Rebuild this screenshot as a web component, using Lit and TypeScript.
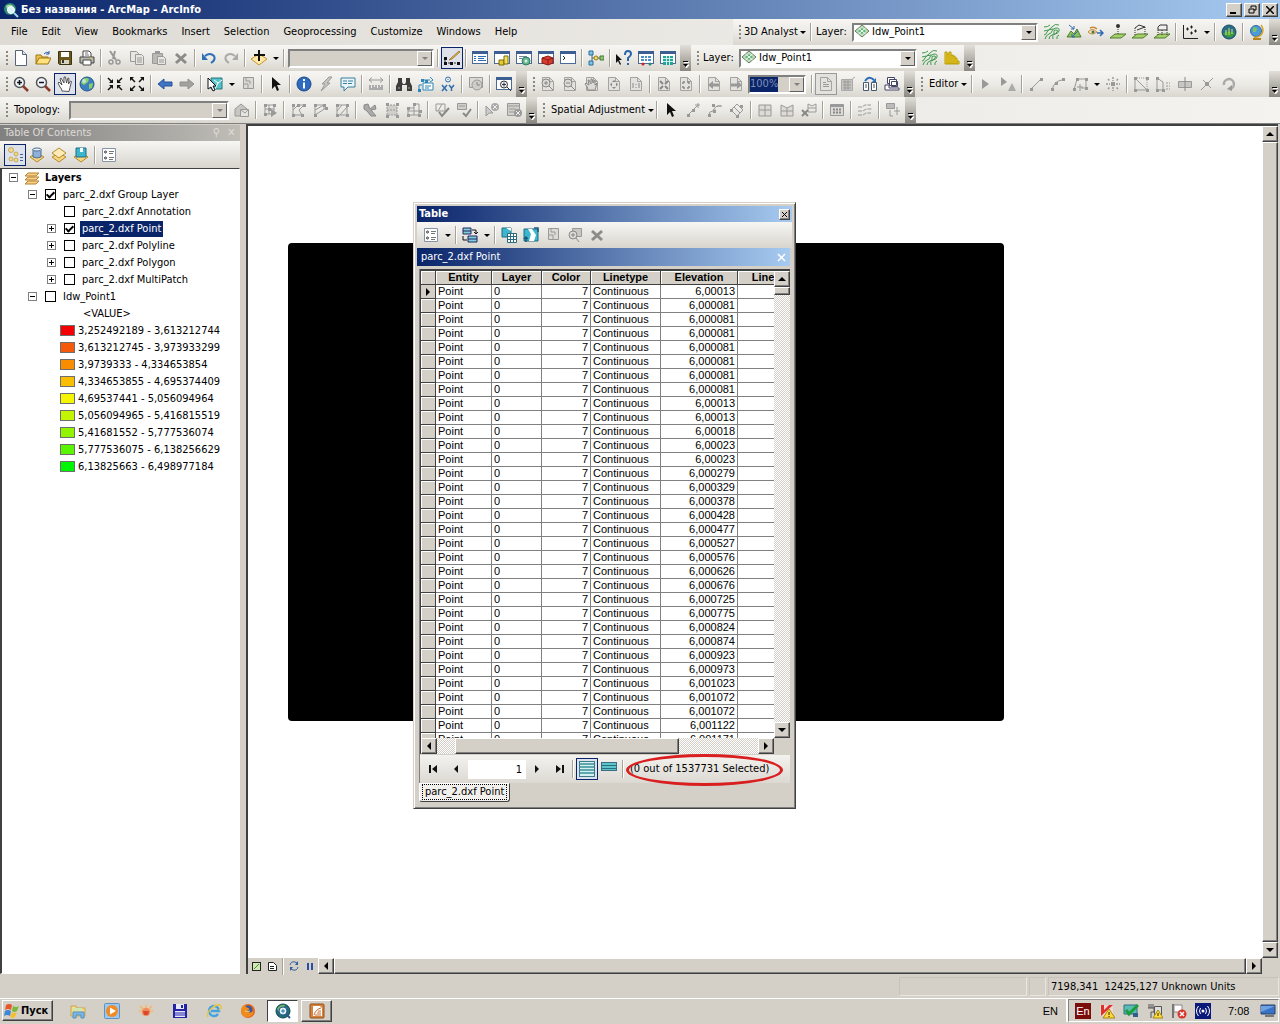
import { LitElement, html, css, svg, nothing } from "lit";
import { customElement, state } from "lit/decorators.js";
import { classMap } from "lit/directives/class-map.js";
import { styleMap } from "lit/directives/style-map.js";

const page = svg`<path d="M2.500 1.500h7l4 4v9h-11z" fill="#e4e2de" stroke="#a5a3a0"/><path d="M9.500 1.500v4h4" fill="none" stroke="#a5a3a0"/>`;
const contour = svg`<g fill="none" stroke="#3d9a4e"><path d="M0 3q4 0 6-2M0 7q5 0 8-4t7-2M0 11q2 0 3-3t6-3M1 15q1-4 4-5t3-3 4-3q4 0 3 3t-4 3-2 5M5 15q0-3 3-4t2-3 2-2 1 2-3 3"/><path d="M13 15q-1-3 2-4" /></g>`;
const layerPage = svg`<path d="M1 10l7-4 7 4-7 5z" fill="#f6d583" stroke="#b58a2c"/>`;
const win = svg`<rect x="0.500" y="1.500" width="15" height="12" fill="#fff" stroke="#4d6a94"/><rect x="0" y="1" width="16" height="3" fill="#3d5e92"/>`;
const sheet = svg`<path d="M0 14h11l5-4H5z" fill="#a6cf6a" stroke="#4f7d2c"/>`;
const nodes = (pts: number[][], c = "#999") => pts.map(([x, y]) => svg`<rect x=${x - 1} y=${y - 1} width="3" height="3" fill=${c}/>`);

const icons: Record<string, unknown> = {
  app: svg`<circle cx="7" cy="7" r="6" fill="#2d8a78"/><path d="M3 4q4-3 7 0l-2 4-4-1z" fill="#a8dba0"/><circle cx="8" cy="8" r="3.500" fill="#d9f2fa" stroke="#fff"/><path d="M11 11l4 4" stroke="#9fd8e8" stroke-width="2"/>`,
  new: svg`<path d="M2.500 0.500h7l4 4v11h-11z" fill="#fff" stroke="#55657c"/><path d="M9.500 0.500v4h4" fill="#dde4ee" stroke="#55657c"/>`,
  open: svg`<path d="M1 14V5h5l1 2h6v3" fill="#f2c04c" stroke="#9c7616"/><path d="M1 14l3-6h12l-3 6z" fill="#ffe27a" stroke="#9c7616"/><path d="M9 4q2-3 5-1M14 1v3h-3" fill="none" stroke="#2a5da8"/>`,
  save: svg`<path d="M1.500 1.500h13v13h-12l-1-1z" fill="#6b5a1c" stroke="#3c3312"/><path d="M4 2h8v5H4z" fill="#fff"/><path d="M4 10h8v4H4z" fill="#d8d4c4"/><path d="M5 10h2v3H5z" fill="#333"/>`,
  print: svg`<path d="M4 7V1h6l2 2v4" fill="#fff" stroke="#444"/><path d="M1 7h14v6H1z" fill="#b9b9b0" stroke="#444"/><path d="M4 10h8v5H4z" fill="#fff" stroke="#444"/><path d="M6 3h3M6 5h4" stroke="#777"/><path d="M11 8h2" stroke="#e0d32e"/>`,
  cut: svg`<path d="M3 1l6 9M8 1l-2 8" stroke="#999" stroke-width="2" fill="none"/><circle cx="4" cy="12" r="2" fill="none" stroke="#999" stroke-width="1.500"/><circle cx="11" cy="12" r="2" fill="none" stroke="#999" stroke-width="1.500"/>`,
  copy: svg`<path d="M1.500 1.500h6l2 2v8h-8z" fill="#e8e6e1" stroke="#999"/><path d="M6.500 4.500h6l2 2v8h-8z" fill="#e8e6e1" stroke="#999"/><path d="M8 8h5M8 10h5M8 12h5" stroke="#999"/>`,
  paste: svg`<path d="M1.500 3.500h10v10h-10z" fill="#bdbab4" stroke="#999"/><path d="M4 1h5v3H4z" fill="#999"/><path d="M6.500 6.500h6l2 2v6h-8z" fill="#e8e6e1" stroke="#999"/><path d="M8 10h5M8 12h5" stroke="#999"/>`,
  del: svg`<path d="M3 4l10 9M13 4L3 13" stroke="#8d8b87" stroke-width="3"/>`,
  undo: svg`<path d="M4 6q5-4 9 0 2 4-3 7" fill="none" stroke="#2f6fb5" stroke-width="2"/><path d="M1 3v7h6z" fill="#2f6fb5"/>`,
  redo: svg`<path d="M12 6q-5-4-9 0-2 4 3 7" fill="none" stroke="#aaa" stroke-width="2"/><path d="M15 3v7H9z" fill="#aaa"/>`,
  add: svg`<path d="M0 9l8-5 8 5-8 6z" fill="#ffe9a8" stroke="#c9942e"/><path d="M8 0v11M3 5h11" stroke="#111" stroke-width="2"/>`,
  edit: svg`<path d="M15 1l-8 7-2 2 3-1 8-7z" fill="#e6b64a" stroke="#8b6a20" stroke-width="0.700"/><path d="M1 7v6h13" fill="none" stroke="#333" stroke-dasharray="2 1"/><path d="M0 7h3v3H0zM0 12h3v3H0zM6 12h3v3H6zM13 12h3v3h-3z" fill="#111"/>`,
  toc: svg`${win}<path d="M2 6.500h2M2 8.500h2M2 10.500h2" stroke="#2e6bb5"/><path d="M6 6.500h8M6 8.500h6M6 10.500h8" stroke="#2e6bb5"/>`,
  catalog: svg`${win}<path d="M5 10h5v5H5z" fill="#e8c92e" stroke="#7b6a11"/><path d="M10 6h4v8h-4z" fill="#f4e05c" stroke="#7b6a11"/>`,
  search: svg`${win}<path d="M3 6.500h8M3 8.500h3" stroke="#789"/><circle cx="10" cy="11" r="4" fill="#66b58a" stroke="#2c7c6a"/><circle cx="10" cy="11" r="1.500" fill="#d7f0e4"/>`,
  toolbox: svg`${win}<path d="M4 8l6-2 5 2v5l-5 2-6-2z" fill="#d63b2d" stroke="#8c1c14"/><path d="M4 8l6 2 5-2M10 10v5" stroke="#8c1c14" fill="none"/>`,
  python: svg`${win}<path d="M3 6l2 2-2 2" fill="none" stroke="#222"/>`,
  model: svg`<path d="M4 3v9M4 8h8" stroke="#4a6b8d" fill="none"/><path d="M1 1h4v4H1zM1 11h4v4H1z" fill="#7cc7ea" stroke="#2a6d9b"/><circle cx="8" cy="8" r="2" fill="#f7e06a" stroke="#8f7b17"/><path d="M12 6h4v4h-4z" fill="#93c47a" stroke="#427a2b"/>`,
  help: svg`<path d="M0 4v9l2-2 2 4 1-1-2-4h3z" fill="#111"/><path d="M9 5q0-4 3-4t3 3q0 2-3 4v3M12 13v2" fill="none" stroke="#2b64a8" stroke-width="2"/>`,
  grid1: svg`${win}<path d="M3 6h10v5H3z" fill="#4b8fc4"/><path d="M3 8.500h10M6.500 6v5M9.500 6v5" stroke="#fff"/><circle cx="5" cy="14" r="1.500" fill="#c22"/><circle cx="12" cy="14" r="1.500" fill="#287"/>`,
  grid2: svg`${win}<path d="M3 6h10v9H3z" fill="#21a494"/><path d="M3 8.500h10M3 11.500h10M6.500 6v9M9.500 6v9" stroke="#cfeee9"/>`,
  contour,
  hist: svg`<path d="M1 14V2h2v2h2V2h2v3h2v1h2v2h2v3h2v3z" fill="#f5d327" stroke="#b59b0a"/><path d="M3 4v10M5 4v10M7 5v9M9 6v8M11 8v6M13 11v3" stroke="#a58b00" stroke-width="0.800"/>`,
  zoomin: svg`<circle cx="6.500" cy="6.500" r="5" fill="#eef4fb" stroke="#555" stroke-width="1.500"/><path d="M4 6.500h5M6.500 4v5" stroke="#111" stroke-width="1.500"/><path d="M10 10l5 5" stroke="#8c3a2b" stroke-width="2.500"/>`,
  zoomout: svg`<circle cx="6.500" cy="6.500" r="5" fill="#eef4fb" stroke="#555" stroke-width="1.500"/><path d="M4 6.500h5" stroke="#111" stroke-width="1.500"/><path d="M10 10l5 5" stroke="#8c3a2b" stroke-width="2.500"/>`,
  pan: svg`<path d="M5 15q0-2-2-4L1 7l1-1 3 3L3 3l1-1 3 5V1h1.500l1 6 1.500-5 1 0.500-0.500 5.500 2-3 1 0.500-1.500 6-1 4z" fill="#fff" stroke="#444" stroke-width="0.900"/>`,
  globe: svg`<circle cx="8" cy="8" r="7" fill="#3b7fc0" stroke="#255a8c"/><path d="M4 3q4-2 6 0l-1 3-4 3-3-2zM10 8l4-1-1 5-3 1z" fill="#8ccf6a"/><circle cx="5" cy="5" r="2" fill="#d8eefc" opacity="0.700"/>`,
  fixin: svg`<g stroke="#111" stroke-width="1.500"><path d="M1 2l4 4M15 2l-4 4M1 14l4-4M15 14l-4-4"/></g><path d="M6 3v4H2zM10 3v4h4zM6 13V9H2zM10 13V9h4z" fill="#111"/>`,
  fixout: svg`<g stroke="#111" stroke-width="1.500"><path d="M2 2l4 4M14 2l-4 4M2 14l4-4M14 14l-4-4"/></g><path d="M1 1h4L1 5zM15 1h-4l4 4zM1 15h4l-4-4zM15 15h-4l4-4z" fill="#111"/>`,
  back: svg`<path d="M1 8l6-5v3h8v4H7v3z" fill="#3f74c2" stroke="#27509a"/>`,
  fwd: svg`<path d="M15 8L9 3v3H1v4h8v3z" fill="#a3a19d" stroke="#92908c"/>`,
  select: svg`<path d="M4 2h11v11H4z" fill="#56c2c9" stroke="#25777c"/><path d="M7 4l4 3 4-3M8 13l3-6" stroke="#fff" fill="none"/><path d="M1 2v11l3-2 2 4 2-1-2-4h3z" fill="#fff" stroke="#111"/>`,
  clear: svg`<path d="M3.500 1.500h10v11h-10z" fill="#dddad5" stroke="#999"/><path d="M6 1v4h4v3M3 8h5v4" fill="none" stroke="#999"/>`,
  arrow: svg`<path d="M4 1v12l3-3 2 5 2-1-2-5h4z" fill="#111"/>`,
  info: svg`<circle cx="8" cy="8" r="7" fill="#2d6bc0" stroke="#1b4585"/><path d="M8 3v2M8 6.500v6" stroke="#fff" stroke-width="2"/>`,
  bolt: svg`<path d="M11 1L4 8h3l-4 7 9-8H9l5-6z" fill="#c9c7c3" stroke="#999"/>`,
  html: svg`<path d="M1 2h14v9H8l-4 4v-4H1z" fill="#eaf5fa" stroke="#3b7f9c"/><path d="M3 5h4M3 7.500h4M8 5h5M8 7.500h4" stroke="#3b7f9c"/>`,
  measure: svg`<path d="M1 4h14M4 1.500L1 4l3 2.500M12 1.500L15 4l-3 2.500" stroke="#999" fill="none"/><path d="M1 9h14v5H1z" fill="#aaa"/><path d="M3.500 9v3M6.500 9v2M9.500 9v3M12.500 9v2" stroke="#eee"/>`,
  find: svg`<path d="M2 2h4v4l1 2h2l1-2V2h4v4l2 4v5h-5V9H6v6H0v-5l2-4z" fill="#3c3c3c"/><path d="M2 12h2M12 12h2" stroke="#aaa"/>`,
  route: svg`<path d="M5 7h10v7H5z" fill="#fff" stroke="#2d86b5"/><path d="M7 10h6M7 12h4M1 14V9h3M4 4h8M12 1l3 3-3 2" stroke="#2d86b5" fill="none"/>${nodes([[4, 4], [1, 14], [8, 5]], "#2d86b5")}`,
  xy: svg`<circle cx="8" cy="3.500" r="2.500" fill="none" stroke="#2d6fb0"/><path d="M8 3v1" stroke="#2d6fb0"/><path d="M2 9l5 6M7 9l-5 6M9 9l2.500 3L14 9M11.500 12v3" stroke="#2d6fb0" stroke-width="1.500" fill="none"/>`,
  time: svg`<path d="M1.500 1.500h13v10h-13z" fill="#dddad5" stroke="#999"/><circle cx="9" cy="9" r="5" fill="#d0cdc8" stroke="#999"/><path d="M9 6v3h3" stroke="#888" fill="none"/>`,
  viewer: svg`${win}<circle cx="8" cy="8.500" r="3.500" fill="#eef" stroke="#333"/><path d="M6 8.500h4M8 6.500v4M11 11l4 4" stroke="#333"/>`,
  lzin: svg`${page}<circle cx="6" cy="7" r="4" fill="#dedbd6" stroke="#888"/><path d="M4 7h4M6 5v4M9 10l4 4" stroke="#888"/>`,
  lzout: svg`${page}<circle cx="6" cy="7" r="4" fill="#dedbd6" stroke="#888"/><path d="M4 7h4M9 10l4 4" stroke="#888"/>`,
  lpan: svg`${page}<path d="M4 14q0-3-3-6l1-1 3 2-1-5h1l2 4V3h1l1 4 2-3v5l2-2-2 7z" fill="#dedbd6" stroke="#888"/>`,
  lfull: svg`${page}<path d="M8 4l2 2H6zM8 13l2-2H6zM4 8.500l2-2v4zM12 8.500l-2-2v4z" fill="#888"/>`,
  l11: svg`${page}<path d="M5 7v5M11 7v5M8 8v1M8 11v1" stroke="#888"/>`,
  lfin: svg`${page}<path d="M4 5l3 3M12 5L9 8M4 13l3-3M12 13l-3-3" stroke="#888" stroke-width="2"/>`,
  lfout: svg`${page}<path d="M5 6h2M5 6v2M11 6H9M11 6v2M5 12h2M5 12v-2M11 12H9M11 12v-2" stroke="#888" stroke-width="1.500"/>`,
  lback: svg`${page}<path d="M2 9l5-4v2.500h6v3H7V13z" fill="#999"/>`,
  lfwd: svg`${page}<path d="M14 9L9 5v2.500H3v3h6V13z" fill="#999"/>`,
  draft: svg`${page}<path d="M5 8.500h6M5 10.500h6M5 6.500h3" stroke="#999"/>`,
  focus: svg`<path d="M1.500 3.500h11v11h-11z" fill="#c9c6c1" stroke="#aaa"/><path d="M3 6h8M3 9h8M3 12h8M5 4v10M8 4v10" stroke="#999"/><path d="M11 4l4-3" stroke="#aaa"/>`,
  layout: svg`<path d="M1.500 6.500h5v8h-5zM9.500 6.500h5v8h-5z" fill="#fff" stroke="#44586f"/><path d="M3 9h2M3 11h2M11 9h2M11 11h2" stroke="#44586f"/><path d="M3 5q4-6 9-1" stroke="#2a6db5" stroke-width="2" fill="none"/><path d="M14 2v4h-4z" fill="#2a6db5"/>`,
  ddp: svg`<path d="M3.500 1.500h7v6h-7z" fill="#fff" stroke="#446"/><path d="M5.500 3.500h7v6h-7zM7.500 5.500h6v5h-6z" fill="#fff" stroke="#446"/><path d="M1 9v5h14v-2H5V9z" fill="#fff" stroke="#446"/>`,
  earrow: svg`<path d="M4 3v10l7-5z" fill="#999"/>`,
  earrow2: svg`<path d="M1 1v9l6-4z" fill="#999"/><path d="M12 7l4 8H8z" fill="#aaa"/>`,
  line: svg`<path d="M3 13L13 3" stroke="#999"/>${nodes([[3, 13], [13, 3]])}`,
  curve: svg`<path d="M2 14q2-9 10-10" stroke="#999" fill="none"/>${nodes([[2, 13], [6, 7], [13, 3]])}`,
  poly: svg`<path d="M2 14L5 3h9v9H9" stroke="#999" fill="none"/><path d="M8 8v7M5 11h6" stroke="#999"/>${nodes([[5, 3], [14, 3], [2, 13], [14, 12]])}`,
  burst: svg`<path d="M8 1v4M8 11v4M1 8h4M11 8h4M3 3l2 2M13 3l-2 2M3 13l2-2M13 13l-2-2" stroke="#999" stroke-width="1.500" stroke-dasharray="2 1"/><rect x="6" y="6" width="4" height="4" fill="#999"/>`,
  tri: svg`<path d="M2 2v12h12z" stroke="#999" fill="none"/><path d="M2 2h12v12" stroke="#999" stroke-dasharray="1 1" fill="none"/>${nodes([[2, 2], [14, 2], [2, 14], [14, 14]])}`,
  tri2: svg`<path d="M2 14V2l6 4v8z" stroke="#999" fill="none"/><path d="M11 7h4M11 10h4M11 13h4" stroke="#999" stroke-dasharray="2 1"/>${nodes([[2, 2], [2, 14], [8, 14]])}`,
  split: svg`<path d="M1.500 5.500h13v6h-13z" fill="#c9c6c1" stroke="#999"/><path d="M8 1v14" stroke="#888"/>`,
  cross: svg`<path d="M2 14L14 2M4 4l8 8" stroke="#999"/><path d="M6 6h4v4H6z" fill="#999"/>`,
  rotate: svg`<path d="M3 9a5 5 0 1 1 6 4" stroke="#aaa" stroke-width="2.500" fill="none"/><path d="M11 9v6l-5-2z" fill="#999"/>`,
  topo: svg`<path d="M1 7l6-5 6 5v7H1z" fill="#c9c6c1" stroke="#999"/><path d="M6.500 7.500h8v7h-8z" fill="#e6e4df" stroke="#999"/><path d="M7 8l4 3 3-3" stroke="#999" fill="none"/>`,
  net1: svg`<path d="M3 3h9v9H3zM3 7h9M7 3v9" stroke="#999" fill="none"/>${nodes([[3, 3], [12, 3], [3, 12], [7, 7]])}<path d="M9 7v8l6-4z" fill="#999"/>`,
  net2: svg`<path d="M3 3v10h9L9 8l5-5H8L3 8" stroke="#999" fill="none"/>${nodes([[3, 3], [8, 3], [14, 3], [3, 13], [12, 13]])}`,
  net3: svg`<path d="M3 13V3h9v4M3 8l9-5M3 13l11-7" stroke="#999" fill="none"/>${nodes([[3, 3], [12, 3], [3, 13], [14, 6]])}`,
  net4: svg`<path d="M3 3h10v10H3zM3 9l5-6M6 13l7-8" stroke="#999" fill="none"/>${nodes([[3, 3], [13, 3], [3, 13], [13, 13]])}`,
  hatch: svg`<path d="M2 3l4-1 2 5 5-4 1 4-5 1 5 6H9L5 9 2 7z" fill="#aaa" stroke="#888"/>`,
  gsq: svg`<path d="M3 3h10v10H3zM3 8h10" stroke="#999" fill="#d2cfca" stroke-dasharray="2 1"/>${nodes([[3, 2], [13, 2], [3, 14], [13, 14]])}`,
  gplus: svg`<path d="M2 9V6h6V2h5v11H2zM8 6v7M2 9h12" stroke="#999" fill="none"/>${nodes([[8, 2], [2, 6], [14, 9], [2, 13], [13, 13]])}`,
  val1: svg`<path d="M2 2h9v7H2zM4 9l4-7" stroke="#999" fill="none"/><path d="M5 10l3 4 7-8" stroke="#888" stroke-width="2" fill="none"/>`,
  val2: svg`<path d="M1.500 1.500h9v6h-9zM3 4h6" stroke="#999" fill="#d2cfca"/><path d="M7 11l3 3 5-7" stroke="#888" stroke-width="2" fill="none"/>`,
  err1: svg`<path d="M2 4v10l3-3 4 0z" fill="#ccc" stroke="#999"/><circle cx="11" cy="5" r="4" fill="#aaa"/><path d="M9 3l4 4M13 3L9 7" stroke="#eee"/>`,
  err2: svg`<path d="M1.500 1.500h12v12h-12zM1 4h13M3 7h7M3 10h5" stroke="#999" fill="#d2cfca"/><circle cx="12" cy="11" r="4" fill="#999"/><path d="M10 9l4 4M14 9l-4 4" stroke="#eee"/>`,
  link1: svg`<path d="M2 14L13 3M10 3h5M13 1v5" stroke="#999" fill="none"/>${nodes([[3, 13], [8, 8]])}`,
  link2: svg`<path d="M2 13q0-4 4-4 2-6 8-5M10 4h5M8 7v4" stroke="#999" fill="none"/>${nodes([[2, 13], [7, 9], [6, 3]])}`,
  link3: svg`<path d="M8 2l6 6-6 6-6-6zM5 5l6 6" stroke="#999" fill="none"/>${nodes([[2, 8], [8, 14], [12, 4]])}`,
  adj1: svg`<path d="M2 3h12v11H2zM2 8h12M8 3v11" stroke="#999" fill="#dedbd6"/>`,
  adj2: svg`<path d="M2 3l6 3 6-3v11H2zM2 9h12M8 6v8" stroke="#999" fill="#dedbd6"/>`,
  adj3: svg`<path d="M7 2l4 2 4-2v8H7zM7 6h8" stroke="#999" fill="none"/><path d="M1 8l6 6M7 8l-6 6" stroke="#888" stroke-width="2"/>`,
  tbl: svg`<path d="M1.500 2.500h13v11h-13z" fill="#dedbd6" stroke="#999"/><path d="M2 4h12" stroke="#999" stroke-width="2"/><path d="M4 7.500h2M7 7.500h2M10 7.500h2M4 10.500h2M7 10.500h2M10 10.500h2" stroke="#888" stroke-width="2"/>`,
  edge: svg`<path d="M1 5h4l3-2h6M1 9h5l3-2h6M1 13h5l3-2h5" stroke="#999" stroke-dasharray="4 1" fill="none"/>`,
  attr: svg`<path d="M1.500 1.500h8v5h-8z" fill="#bbb" stroke="#999"/><path d="M5 8v6M5 14h3M12 5v8M9 9h6" stroke="#999" fill="none"/>`,
  tin1: svg`<path d="M1 13l4-6 3 3 3-5 4 8z" fill="#8cc15e" stroke="#4f7d2c"/><path d="M3 1l5 4M8 5H5M8 5V2M12 7l-6 6M6 13v-3M6 13h3" stroke="#2b6bb5" fill="none"/>`,
  eye: svg`<path d="M0 8q4-5 9 0-5 4-9 0" fill="#f5dfc2" stroke="#c98a3e"/><circle cx="5" cy="8" r="1.500" fill="#3a7d3a"/><path d="M2 4q4-2 7 1" stroke="#c98a3e" stroke-width="1.500" fill="none"/><path d="M9 9h6M12 6l3 3-3 3" stroke="#2b6bb5" stroke-width="1.500" fill="none"/>`,
  pt3d: svg`${sheet}<path d="M8 3v8" stroke="#333" stroke-dasharray="1 1"/><circle cx="8" cy="2" r="2" fill="#333"/>`,
  ln3d: svg`${sheet}<path d="M3 4l4-3 6 2-8 3" stroke="#333" fill="none"/><path d="M3 4v8M13 3v8" stroke="#333" stroke-dasharray="1 1"/>`,
  pg3d: svg`${sheet}<path d="M4 6V3l2-2h7v5z" stroke="#333" fill="#eee"/><path d="M4 6v6M13 6v5M8 6v5" stroke="#333" stroke-dasharray="1 1"/>`,
  scatter: svg`<path d="M1.500 1v13.500H16" stroke="#222" fill="none"/><path d="M4 5h3M5.500 3.500v3M8 3h3M9.500 1.500v3M8 9h3M9.500 7.500v3M12 7h3M13.500 5.500v3" stroke="#222" fill="none"/>`,
  scene: svg`<circle cx="8" cy="8" r="7" fill="#2a6d87" stroke="#1d4d60"/><path d="M2 9q6-3 12 0-5 9-12 0" fill="#3a9a3e"/><path d="M5 6v5M8 4v7M11 5v5" stroke="#d7e86a"/>`,
  earth: svg`<circle cx="7" cy="7" r="5.500" fill="#4c9bd8" stroke="#2b6ba4"/><path d="M4 3l4 1-1 4-3 0z" fill="#7ac35e"/><path d="M12 1q4 5 0 10-3 3-7 2" fill="none" stroke="#d6a226" stroke-width="1.500"/><path d="M4 15h8" stroke="#b5831c" stroke-width="2"/>`,
  raster: svg`<path d="M8 1l7 6-7 6-7-6z" fill="#c4dcc0" stroke="#5f7f5c"/><path d="M8 4l4 3-4 3-4-3z" fill="#5cb878"/><path d="M4.500 4l7 6M11.500 4l-7 6" stroke="#f5fbf5"/>`,
  listdraw: svg`<circle cx="4" cy="3" r="2.500" fill="#f0d98a" stroke="#b5963c" stroke-width="0.700"/><circle cx="9" cy="7" r="2" fill="#f0d98a" stroke="#b5963c" stroke-width="0.700"/><circle cx="4" cy="12" r="2" fill="#f0d98a" stroke="#b5963c" stroke-width="0.700"/><circle cx="9" cy="13" r="2" fill="#f0d98a" stroke="#b5963c" stroke-width="0.700"/><path d="M13 7.500h3M13 10.500h3M13 13.500h3" stroke="#47649a" fill="none"/>`,
  listsrc: svg`${layerPage}<path d="M4 2v8q4 2 8 0V2z" fill="#8fb0d8" stroke="#4d6d93"/><ellipse cx="8" cy="2.500" rx="4" ry="1.500" fill="#eef5fc" stroke="#4d6d93"/>`,
  listvis: svg`<path d="M1 10l7-4 7 4-7 5z" fill="#f6d583" stroke="#b58a2c"/><path d="M1 6l7-5 7 5-7 5z" fill="#fdeab6" stroke="#b58a2c"/>`,
  listsel: svg`${layerPage}<path d="M3 1h10v9H3z" fill="#3bb6cc" stroke="#1f6d85"/><path d="M7 1h3v4h-3z" fill="#fff"/>`,
  options: svg`<path d="M1.500 1.500h13v13h-13z" fill="#fff" stroke="#8793a8"/><circle cx="4.500" cy="5" r="1" fill="none" stroke="#333"/><circle cx="4.500" cy="11" r="1" fill="none" stroke="#333"/><path d="M8 4.500h5M8 6.500h4M8 10.500h5M8 12.500h4" stroke="#777"/>`,
  layers: svg`<path d="M1 14l3-3h11l-3 3zM1 10l3-3h11l-3 3zM1 6l3-3h11l-3 3z" fill="#f7d08a" stroke="#b8812a"/>`,
  related: svg`<path d="M1 1h8v6H1zM6 9h9v6H6z" fill="#7fd0d3" stroke="#226"/><path d="M1 4h8M6 12h9" stroke="#226"/><path d="M10 3h4v4M12 5l2 2 2-2M5 13H1V9" stroke="#111" fill="none"/>`,
  selattr: svg`<path d="M1 1h9v9H1z" fill="#3bb6cc" stroke="#1f6d85"/><path d="M5 1l5 3v-3z" fill="#fff"/><path d="M6.500 6.500h9v9h-9z" fill="#fff" stroke="#2c6a80"/><path d="M7 9.500h8M7 12.500h8M9.500 7v8M12.500 7v8" stroke="#2c6a80"/>`,
  switchsel: svg`<path d="M1 2h14v12H1z" fill="#3bb6cc" stroke="#1f6d85"/><path d="M5 2l3 5-2 7h5l2-6-4-6z" fill="#fff"/><path d="M11 1h4v4M3 15v-4M1 12l2-2 2 2" stroke="#1a5a78" stroke-width="1.500" fill="none"/>`,
  zoomsel: svg`<path d="M5.500 1.500h9v8h-9z" fill="#cbc8c3" stroke="#999"/><circle cx="6" cy="8" r="4" fill="#dedbd6" stroke="#888"/><path d="M4 8h4M6 6v4M9 11l3 4" stroke="#888"/>`,
  first: svg`<path d="M4 4v8" stroke="#111" stroke-width="2"/><path d="M11 4v8L6 8z" fill="#111"/>`,
  prev: svg`<path d="M10 4v8L6 8z" fill="#111"/>`,
  next: svg`<path d="M6 4v8l4-4z" fill="#111"/>`,
  last: svg`<path d="M12 4v8" stroke="#111" stroke-width="2"/><path d="M5 4v8l5-4z" fill="#111"/>`,
  allrec: svg`<rect x="0.500" y="0.500" width="15" height="15" fill="#d4f0f0" stroke="#3a7c88"/><path d="M1 3h14M1 6h14M1 9h14M1 12h14" stroke="#3a8f98" stroke-width="1.500"/>`,
  selrec: svg`<rect x="0.500" y="1.500" width="15" height="8" fill="#5ec3cb" stroke="#3a6c88"/><path d="M1 4.500h14M1 7.500h14" stroke="#256f7c"/>`,
  dataview: svg`<rect x="4.500" y="4.500" width="8" height="8" fill="#cfe8b4" stroke="#222"/><path d="M6 11l5-5" stroke="#4a8a3a"/>`,
  pageview: svg`<path d="M4.500 4.500h5l3 3v5h-8z" fill="#fff" stroke="#222"/><path d="M6 8.500h4M6 10.500h4" stroke="#222"/>`,
  refresh: svg`<path d="M4 7q1-4 5-3l2 1M12 9q-1 4-5 3l-2-1" stroke="#2b5f9b" fill="none"/><path d="M12 3v4H9zM4 13V9h3z" fill="#2b5f9b"/>`,
  pause: svg`<path d="M6 5v7M10 5v7" stroke="#2a4ea3" stroke-width="2"/>`,
  start: svg`<path d="M2 2q3-2 6 0L7 7Q4 5 1 7z" fill="#e8572b"/><path d="M9 3q3 2 6 0l-2 5q-3 2-5 0z" fill="#7cb83a"/><path d="M1 8q3-2 6 0l-1 5q-3-2-6 0z" fill="#3f86d6"/><path d="M8 9q2 2 5 0l-2 5q-2 2-5 0z" fill="#f5c02f"/>`,
  explorer: svg`<path d="M1 13V3h5l1 2h8v8z" fill="#f6dc88" stroke="#c7a54a"/><path d="M3 5h9v3H3z" fill="#cde6b0"/><path d="M3 9h11v6h-3v-3H6v3H3z" fill="#7db9e8" stroke="#4f8fc2"/>`,
  media: svg`<rect x="0.500" y="0.500" width="15" height="15" rx="1" fill="#9ec7ee" stroke="#5b92c8"/><circle cx="8" cy="8" r="6" fill="#f08a24"/><path d="M6 4.500v7L12 8z" fill="#fff"/>`,
  sun: svg`<path d="M8 9L2 3M8 9L1 8M8 9l6-6M8 9l7-1M8 9V2" stroke="#f5b878" stroke-width="2"/><circle cx="8" cy="9" r="4" fill="#f08a5c"/><path d="M5 8h6l-1 4H6z" fill="#d84a2c"/>`,
  floppy: svg`<path d="M1 1h14v14H1z" fill="#2323a8"/><path d="M4 1h8v5H4z" fill="#e8e8f8"/><path d="M9 2h2v3H9z" fill="#2323a8"/><path d="M3 8h10v6H3z" fill="#e8e8f8"/><path d="M3 10h10M3 12h10" stroke="#2323a8"/>`,
  ie: svg`<path d="M12 11a5 5 0 1 1 1-3H5" fill="none" stroke="#3fa3e4" stroke-width="2.500"/><path d="M2 14Q0 10 6 5t9-2q1 2-2 4" fill="none" stroke="#e9c446" stroke-width="1.500"/>`,
  firefox: svg`<circle cx="8" cy="8" r="7" fill="#e8661c"/><circle cx="8" cy="7" r="4.500" fill="#3658a8"/><path d="M1 7q1-5 4-5 0 2 3 3t-1 3q3 3 6 0 1 5-5 6T1 7" fill="#f08c1e"/><path d="M5 8q3 1 5 0" stroke="#f9d36a" fill="none"/>`,
  arcmap: svg`<circle cx="8" cy="8" r="7" fill="#1f6e7c" stroke="#114450"/><path d="M2 6q3-5 8-4l-2 4-4 3z" fill="#6fb86a"/><circle cx="8" cy="8" r="4" fill="#e3f3fa" stroke="#2a5888"/><path d="M6 8h4M8 6v4" stroke="#2d6fb0"/><path d="M11 11l4 4" stroke="#2a5888" stroke-width="2"/>`,
  ppt: svg`<rect x="1" y="1" width="14" height="14" rx="1" fill="#d8843c" stroke="#8c4f1c"/><path d="M4 3h7l2 2v8H4z" fill="#fff"/><path d="M5 12q2-6 7-7M6 12h6M8 10h4M9 8h3" stroke="#c8692a" fill="none"/>`,
  kasper: svg`<path d="M1 2h13v11H1z" fill="#f3d4cf"/><path d="M2 2h3v5l5-5h4L2 13z" fill="#d8342c"/><path d="M10 6l6 9H4z" fill="#ffd83a" stroke="#a8860e"/><path d="M10 9v3M10 13v1" stroke="#222"/>`,
  usb: svg`<path d="M1 2h13v9H1z" fill="#5abdb4" stroke="#2e6d86"/><path d="M3 7l3 4 9-9" stroke="#1c9c3a" stroke-width="3" fill="none"/><path d="M10 10h5v4h-5z" fill="#345c8c"/>`,
  net: svg`<path d="M2 1v4M4 1v4M6 1v4M1 5h6v4H4v6" stroke="#555" fill="none"/><path d="M7.500 3.500h7v8h-7z" fill="#ddd" stroke="#555"/><path d="M11 7l5 8H6z" fill="#ffe03a" stroke="#a8860e"/><path d="M11 10v3" stroke="#222"/>`,
  flag: svg`<path d="M2 1v14" stroke="#555" stroke-width="1.500"/><path d="M3 2h8v7H3z" fill="#fff" stroke="#888"/><circle cx="11" cy="11" r="4.500" fill="#d8342c"/><path d="M9 9l4 4M13 9l-4 4" stroke="#fff" stroke-width="1.500"/>`,
  wifi: svg`<rect width="16" height="16" fill="#0a1a7a"/><circle cx="8" cy="8" r="1.500" fill="#fff"/><path d="M5.500 5q-2 3 0 6M10.500 5q2 3 0 6M3.500 3q-4 5 0 10M12.500 3q4 5 0 10" stroke="#fff" fill="none"/>`,
  monitor: svg`<path d="M1 2h14v9H1z" fill="#3a72c4" stroke="#27406e"/><path d="M1 3h14L1 9z" fill="#6ea0e4"/><path d="M5 13h9" stroke="#777" stroke-width="2"/>`,
};

const ico = (name: string) => html`<svg class="ico" viewBox="0 0 16 16" width="16" height="16" aria-hidden="true">${icons[name]}</svg>`;

/* Toolbar strings: "|" separator, "name>" drop-down button, "name*" pressed button, "name_" pressed but unavailable. */
const tools = (spec: string) => spec.split(" ").map((token) => {
  if (token === "|") return html`<span class="sep"></span>`;
  const name = token.replace(/[>*_]/, "");
  return html`<button class=${classMap({ tool: true, pressed: token.endsWith("*"), dim: token.endsWith("_"), wide: token.endsWith(">") })} aria-label=${name}>
    ${ico(name)}${token.endsWith(">") ? html`<span class="caret"></span>` : nothing}</button>`;
});
const grip = html`<span class="grip"></span>`;
const overflow = html`<button class="overflow" aria-label="Toolbar options"><svg width="7" height="7" viewBox="0 0 7 7"><path d="M2 1.500h5M2 4h5L4.500 7z" stroke="#fff" fill="#fff"/><path d="M1 0.500h5" stroke="#000"/><path d="M1 3h5L3.500 6z" fill="#000"/></svg></button>`;
const combo = (label: string, value: string, cls: string, icon = "") => html`
  <span class="combo ${cls}">${icon ? ico(icon) : nothing}
    <select aria-label=${label}><option>${value}</option></select><span class="drop"><span class="caret"></span></span>
  </span>`;

const menus = ["File", "Edit", "View", "Bookmarks", "Insert", "Selection", "Geoprocessing", "Customize", "Windows", "Help"];
const sublayers: [string, boolean, boolean][] = [
  ["Annotation", false, false], ["Point", true, true], ["Polyline", true, false], ["Polygon", true, false], ["MultiPatch", true, false],
];
const classes: [string, string][] = [
  ["#f50000", "3,252492189 - 3,613212744"], ["#f55a0a", "3,613212745 - 3,973933299"], ["#fa8c00", "3,9739333 - 4,334653854"],
  ["#fabe00", "4,334653855 - 4,695374409"], ["#f5f500", "4,69537441 - 5,056094964"], ["#c3f500", "5,056094965 - 5,416815519"],
  ["#91f500", "5,41681552 - 5,777536074"], ["#5af500", "5,777536075 - 6,138256629"], ["#00f500", "6,13825663 - 6,498977184"],
];
const elevations = ("00013 000081 000081 000081 000081 000081 000081 000081 00013 00013 00018 00023 00023 000279 000329 000378 " +
  "000428 000477 000527 000576 000626 000676 000725 000775 000824 000874 000923 000973 001023 001072 001072 001122 001171")
  .split(" ").map((d) => "6," + d);

@customElement("app-root")
export class AppRoot extends LitElement {
  @state() private selected = "Point";

  static styles = css`
    :host { display: flex; flex-direction: column; min-height: 100vh; background: #d4d0c8; color: #000;
      font: 11px/14px "DejaVu Sans Condensed", "Liberation Sans", sans-serif; overflow: hidden; }
    * { box-sizing: border-box; }
    button, select, input { font: inherit; color: inherit; margin: 0; padding: 0; border: 0; background: none; border-radius: 0; }
    button { white-space: nowrap; }
    .ico { display: block; flex: none; }
    .grow { flex: 1; }
    .grad { background: linear-gradient(90deg, #0a246a, #a6caf0); color: #fff; }
    .raised { background: #d4d0c8; border: 1px solid; border-color: #fff #404040 #404040 #fff; box-shadow: inset -1px -1px #808080; }

    .title { display: flex; align-items: center; height: 19px; padding: 0 2px 0 3px; gap: 2px; font-weight: bold; }
    .title h1 { flex: 1; margin: 0; font-size: 11px; }
    .title .raised { width: 16px; height: 14px; display: grid; place-items: center; }

    .bars { background: linear-gradient(90deg, #dedbd5, #f5f3f0); border-bottom: 1px solid #808080; }
    .row { display: flex; height: 26px; }
    .bar { display: flex; align-items: center; height: 26px; background: linear-gradient(#f7f6f3, #eceae5 50%, #dad7d0); }
    .menu { display: flex; align-items: center; padding-left: 4px; flex: 1; }
    .menu button { padding: 0 7px; height: 20px; }
    .right { margin-left: auto; }
    .grip { width: 10px; height: 16px; flex: none; background: radial-gradient(circle, #8a877f 1px, transparent 1px) 3px 0 / 8px 4px repeat-y; }
    .sep { width: 6px; height: 18px; flex: none; background: linear-gradient(90deg, transparent 2px, #a6a298 2px 3px, #fff 3px 4px, transparent 4px); }
    .tool { width: 22px; height: 22px; flex: none; display: flex; align-items: center; justify-content: center; }
    .wide { width: 33px; justify-content: space-between; padding: 0 2px 0 3px; }
    .pressed { background: #dfe1ea; border: 1px solid #0a246a; }
    .dim { background: #e4e2de; border: 1px solid #999; }
    .caret { display: inline-block; width: 0; height: 0; border: 3px solid transparent; border-top-color: currentColor; border-bottom: 0; flex: none; }
    .overflow { width: 11px; height: 26px; margin-left: 1px; flex: none; background: linear-gradient(#e2dfd9, #b7b4ae 50%, #8b8882); display: flex; align-items: flex-end; justify-content: center; padding-bottom: 3px; }
    .label { padding: 0 4px 0 2px; white-space: nowrap; }
    .text { display: flex; align-items: center; gap: 3px; padding: 0 0 0 4px; height: 22px; }
    .w-analyst { width: 65px; padding-left: 1px; gap: 2px; } .w-layer { width: 38px; } .w-topology { width: 57px; padding-left: 4px; }
    .w-editor { width: 44px; } .w-spatial { width: 107px; }
    .combo { display: flex; align-items: center; height: 19px; background: #fff; border: 2px solid; border-color: #808080 #fff #fff #808080; flex: none; }
    .combo select { appearance: none; flex: 1; min-width: 0; height: 15px; padding-left: 2px; outline: 0; }
    .drop { width: 15px; height: 15px; display: grid; place-items: center; background: #d4d0c8; border: 1px solid; border-color: #fff #606060 #606060 #fff; }
    .off { background: #d4d0c8; color: #808080; }
    .c-template { width: 146px; margin: 0 1px; } .c-topology { width: 160px; margin: 0 2px; } .c-layer { width: 178px; margin-right: 2px; }
    .c-zoom { width: 58px; margin: 0 3px 0 1px; } .c-analyst { width: 186px; margin-right: 3px; }
    .c-zoom select { background: linear-gradient(90deg, #0a246a 28px, transparent 28px); color: #7f8fb8; padding-left: 0; }

    .main { display: flex; flex: 1; min-height: 0; }
    .toc { width: 240px; display: flex; flex-direction: column; flex: none; padding-top: 1px; }
    .toc-head { display: flex; justify-content: space-between; height: 16px; padding: 0 1px 0 4px; line-height: 16px; background: linear-gradient(90deg, #808080, #c0bdb7); color: #dedbd5; }
    .toc-head button { width: 15px; }
    .toc-tools { display: flex; align-items: center; height: 27px; padding-left: 4px; background: linear-gradient(#f7f6f3, #d8d5ce); }
    .tree { flex: 1; margin: 0; padding: 0; list-style: none; background: #fff; border: solid #404040; border-width: 1px 1px 1px 2px; border-right-color: #fff; border-bottom-color: #fff; }
    .tree li, .tree label { display: flex; align-items: center; }
    .tree li { height: 17px; }
    .l0 { padding-left: 7px; } .l1 { padding-left: 26px; } .l2 { padding-left: 45px; } .l3 { padding-left: 81px; } .l4 { padding-left: 58px; }
    .node { width: 9px; height: 9px; border: 1px solid #808080; background: linear-gradient(#000, #000) center / 5px 1px no-repeat; margin-right: 8px; flex: none; }
    .node.plus { background: linear-gradient(#000, #000) center / 5px 1px no-repeat, linear-gradient(#000, #000) center / 1px 5px no-repeat; }
    .node.none { visibility: hidden; }
    .l0 .node { margin-right: 6px; }
    .l0 b { margin-left: 5px; }
    .tree input { appearance: none; width: 11px; height: 11px; border: 1px solid #000; background: #fff; margin-right: 5px; display: grid; place-items: center; }
    .tree input:checked::after { content: ""; width: 3px; height: 6px; margin-top: -2px; border: solid #000; border-width: 0 2px 2px 0; transform: rotate(45deg); }
    .tree label span { padding: 0 2px; height: 16px; line-height: 16px; }
    .tree .on { background: #0a246a; color: #fff; }
    .swatch { width: 15px; height: 11px; border: 1px solid #6e6e6e; margin-right: 3px; }

    .map { flex: 1; min-width: 0; margin: 0 2px 0 6px; display: grid; grid-template: 1fr 16px / 1fr 16px; border: solid #404040; border-width: 2px 0 0 2px; }
    .canvas { position: relative; background: #fff; min-height: 0; }
    .points { position: absolute; left: 40px; top: 117px; width: 716px; height: 478px; background: #000; border-radius: 4px; }
    .vbar, .hbar { display: flex; background: #e9e7e3; }
    .vbar { flex-direction: column; }
    .vbar .thumb, .hbar .thumb { flex: 1; }
    .sq { width: 16px; height: 16px; flex: none; display: grid; place-items: center; }
    .up, .down, .left, .rightarrow { border: 4px solid transparent; }
    .up { border-bottom-color: #000; border-top: 0; } .down { border-top-color: #000; border-bottom: 0; }
    .left { border-right-color: #000; border-left: 0; } .rightarrow { border-left-color: #000; border-right: 0; }
    .views { display: flex; background: #d4d0c8; align-items: center; }
    .views .tool { width: 16px; height: 16px; }

    .window { position: absolute; left: 165px; top: 76px; width: 383px; background: #d4d0c8; border: 1px solid; border-color: #d4d0c8 #404040 #404040 #d4d0c8; box-shadow: inset 1px 1px #fff, inset -1px -1px #808080; padding: 3px; }
    .win-title { display: flex; align-items: center; justify-content: space-between; height: 16px; padding: 0 2px; font-weight: bold; }
    .win-title button { width: 11px; height: 11px; display: grid; place-items: center; }
    .win-tools { display: flex; align-items: center; height: 26px; padding-left: 3px; background: linear-gradient(#f7f6f3, #d8d5ce); }
    .sub-title { display: flex; justify-content: space-between; align-items: center; height: 18px; padding: 0 4px; margin-right: 2px; }
    .win-body { border-left: 1px solid #808080; margin: 3px 2px 0 2px; }
    .data { display: grid; grid-template: 467px 16px / 1fr 16px; border: solid #404040; border-width: 2px 0 0 1px; }
    .clip { overflow: hidden; background: #fff; }
    table { border-collapse: separate; border-spacing: 0; table-layout: fixed; width: 382px; font: 11px/13px "Liberation Sans", Arial, sans-serif; }
    td, th { height: 14px; padding: 0 2px; border: solid #808080; border-width: 0 1px 1px 0; overflow: hidden; white-space: nowrap; }
    thead th { background: #d4d0c8; border-color: #404040; box-shadow: inset 1px 1px #fff; }
    tbody th { background: #d4d0c8; border-color: #404040; box-shadow: inset 1px 1px #fff; padding: 0; }
    tbody .cur { box-shadow: none; padding-left: 5px; }
    .cur .rightarrow { display: block; width: 0; border-width: 4px 0 4px 4px; }
    .num { text-align: right; }
    .track { background: repeating-conic-gradient(#fff 0 25%, #d4d0c8 0 50%) 0 0 / 2px 2px; }
    .track .thumb { flex: none; } .v-thumb { height: 8px; }
    .h-pad { width: 18px; } .h-thumb { width: 224px; }
    .corner { background: #d4d0c8; }
    .nav { display: flex; align-items: center; height: 28px; margin-top: 1px; background: linear-gradient(#f4f2ee, #dcd9d3); padding-left: 3px; }
    .nav input { width: 58px; height: 19px; margin-left: 1px; background: #fff; text-align: right; padding-right: 4px; }
    .count { position: relative; margin-left: 4px; white-space: nowrap; }
    .mark { position: absolute; left: -4px; top: -8px; width: 157px; height: 32px; border: 3px solid #d81e1e; border-radius: 50%; }
    .tabs { height: 22px; padding-left: 2px; }
    .tab { height: 19px; padding: 0 3px 2px; background: #f2f0ec; border: 1px solid; border-color: #fff #404040 #404040 #fff; border-radius: 0 0 3px 3px; }
    .tab span { outline: 1px dotted #000; display: block; padding: 0 2px; }

    .status { display: flex; justify-content: flex-end; height: 24px; gap: 2px; padding: 3px 1px 2px; }
    .status span { border: 1px solid; border-color: #c6c2ba #e8e6e1 #e8e6e1 #c6c2ba; }
    .s1 { width: 128px; } .s2 { width: 17px; } .s3 { width: 231px; padding-left: 2px; line-height: 17px; white-space: pre; }

    .task { display: flex; align-items: center; height: 26px; border-top: 1px solid #fff; padding: 0 1px 2px 2px; }
    .start { display: flex; align-items: center; gap: 1px; width: 51px; height: 21px; padding-left: 1px; font-weight: bold; }
    .quick { display: flex; padding: 0 2px 0 8px; }
    .quick button { width: 34px; height: 22px; display: grid; place-items: center; }
    .app { width: 31px; height: 22px; display: grid; place-items: center; margin-right: 3px; }
    .active { background: #fff; border: 1px solid; border-color: #404040 #fff #fff #404040; }
    .lang { margin-left: auto; padding-right: 10px; font: 11px/14px "Liberation Sans", sans-serif; }
    .tray { display: flex; align-items: center; height: 23px; width: 211px; padding-left: 6px; border: 1px solid; border-color: #808080 #fff #fff #808080; box-shadow: -2px 0 #fff; gap: 8px; }
    .en { width: 16px; height: 16px; background: #7a0c0c; color: #fff; font: 11px/16px "Liberation Sans", sans-serif; text-align: center; }
    .clock { margin: 0 3px 0 9px; font: 11px/14px "Liberation Sans", sans-serif; }
  `;

  private scrollButton(dir: string) {
    return html`<button class="sq raised" aria-label="Scroll ${dir}"><span class=${dir}></span></button>`;
  }

  private renderBars() {
    return html`<div class="bars">
      <div class="row">
        <nav class="menu">${menus.map((m) => html`<button>${m}</button>`)}</nav>
        <div class="bar right">${grip}<button class="text w-analyst">3D Analyst<span class="caret"></span></button>${tools("|")}
          <span class="label w-layer">Layer:</span>${combo("3D Analyst layer", "Idw_Point1", "c-analyst", "raster")}
          ${tools("contour tin1 eye pt3d ln3d pg3d | scatter> | scene | earth")}${overflow}</div>
      </div>
      <div class="row">
        <div class="bar">${grip}${tools("new open save print | cut copy paste del | undo redo | add> |")}${combo("Scale", "", "c-template off")}
          ${tools("| edit* | toc catalog search toolbox python | model | help grid1 grid2")}${overflow}</div>
        <div class="bar">${grip}<span class="label w-layer">Layer:</span>${combo("Layer", "Idw_Point1", "c-layer", "raster")}${tools("contour hist")}${overflow}</div>
      </div>
      <div class="row">
        <div class="bar">${grip}${tools("zoomin zoomout pan* globe | fixin fixout | back fwd | select> clear | arrow | info bolt html | measure | find route xy | time | viewer")}${overflow}</div>
        <div class="bar">${grip}${tools("lzin lzout lpan lfull l11 | lfin lfout | lback lfwd")}${combo("Zoom", "100%", "c-zoom off")}
          ${tools("| draft_ focus layout ddp")}${overflow}</div>
        <div class="bar grow">${grip}<button class="text w-editor">Editor<span class="caret"></span></button>
          ${tools("| earrow earrow2 | line curve poly> burst | tri tri2 split cross rotate")}<span class="right"></span>${overflow}</div>
      </div>
      <div class="row">
        <div class="bar">${grip}<span class="label w-topology">Topology:</span>${combo("Topology", "", "c-topology off")}
          ${tools("topo | net1 | net2 net3 net4 | hatch gsq gplus | val1 val2 | err1 err2")}${overflow}</div>
        <div class="bar">${grip}<button class="text w-spatial">Spatial Adjustment<span class="caret"></span></button>
          ${tools("| arrow link1 link2 link3 | adj1 adj2 adj3 | tbl | edge | attr")}${overflow}</div>
      </div>
    </div>`;
  }

  private renderToc() {
    return html`<aside class="toc">
      <div class="toc-head"><span>Table Of Contents</span><span><button aria-label="Pin">&#9906;</button><button aria-label="Close">&#10005;</button></span></div>
      <div class="toc-tools">${tools("listdraw* listsrc listvis listsel | options")}</div>
      <ul class="tree">
        <li class="l0"><span class="node"></span>${ico("layers")}<b>Layers</b></li>
        <li class="l1"><span class="node"></span><label><input type="checkbox" checked><span>parc_2.dxf Group Layer</span></label></li>
        ${sublayers.map(([name, expandable, checked]) => html`<li class="l2">
          <span class=${classMap({ node: true, plus: true, none: !expandable })}></span>
          <label @click=${() => (this.selected = name)}><input type="checkbox" ?checked=${checked}><span class=${classMap({ on: this.selected === name })}>parc_2.dxf ${name}</span></label></li>`)}
        <li class="l1"><span class="node"></span><label><input type="checkbox"><span>Idw_Point1</span></label></li>
        <li class="l3">&lt;VALUE&gt;</li>
        ${classes.map(([color, range]) => html`<li class="l4"><span class="swatch" style=${styleMap({ background: color })}></span>${range}</li>`)}
      </ul>
    </aside>`;
  }

  private renderTable() {
    return html`<section class="window">
      <div class="win-title grad"><span>Table</span><button class="raised" aria-label="Close window"><svg width="5" height="5" viewBox="0 0 5 5"><path d="M0 0l5 5M5 0L0 5" stroke="#000"/></svg></button></div>
      <div class="win-tools">${tools("options> | related> | selattr switchsel clear zoomsel del")}</div>
      <div class="sub-title grad"><span>parc_2.dxf Point</span><svg width="9" height="9" viewBox="0 0 9 9"><path d="M1 1l7 7M8 1L1 8" stroke="#fff" stroke-width="1.500"/></svg></div>
      <div class="win-body">
        <div class="data">
          <div class="clip"><table>
            <colgroup><col width="15"><col width="56"><col width="50"><col width="49"><col width="70"><col width="77"><col width="65"></colgroup>
            <thead><tr><th></th><th>Entity</th><th>Layer</th><th>Color</th><th>Linetype</th><th>Elevation</th><th>LineWt</th></tr></thead>
            <tbody>${elevations.map((e, i) => html`<tr><th class=${i ? "" : "cur"}>${i ? nothing : html`<span class="rightarrow"></span>`}</th>
              <td>Point</td><td>0</td><td class="num">7</td><td>Continuous</td><td class="num">${e}</td><td></td></tr>`)}</tbody>
          </table></div>
          <div class="vbar track">${this.scrollButton("up")}<span class="thumb v-thumb raised"></span><span class="grow"></span>${this.scrollButton("down")}</div>
          <div class="hbar track">${this.scrollButton("left")}<span class="h-pad"></span><span class="thumb h-thumb raised"></span><span class="grow"></span>${this.scrollButton("rightarrow")}</div>
          <div class="corner"></div>
        </div>
        <div class="nav">${tools("first prev")}<input aria-label="Record" value="1">${tools("next last | allrec* selrec |")}
          <span class="count">(0 out of 1537731 Selected)<span class="mark"></span></span></div>
      </div>
      <div class="tabs"><button class="tab"><span>parc_2.dxf Point</span></button></div>
    </section>`;
  }

  render() {
    return html`
      <header class="title grad">${ico("app")}<h1>Без названия - ArcMap - ArcInfo</h1>
        <button class="raised" aria-label="Minimize"><svg width="8" height="8" viewBox="0 0 8 8"><path d="M0 7h6" stroke="#000" stroke-width="2"/></svg></button>
        <button class="raised" aria-label="Restore"><svg width="9" height="9" viewBox="0 0 9 9"><path d="M3 3V1h5v4H6M1 4h5v4H1z" stroke="#000" fill="none"/></svg></button>
        <button class="raised" aria-label="Close"><svg width="8" height="8" viewBox="0 0 8 8"><path d="M0 0l8 8M8 0L0 8" stroke="#000" stroke-width="1.500"/></svg></button>
      </header>
      ${this.renderBars()}
      <main class="main">
        ${this.renderToc()}
        <div class="map">
          <div class="canvas"><div class="points"></div>${this.renderTable()}</div>
          <div class="vbar">${this.scrollButton("up")}<span class="thumb raised"></span>${this.scrollButton("down")}</div>
          <div class="views">${tools("dataview pageview | refresh pause")}${this.scrollButton("left")}<span class="hbar grow"><span class="thumb sq raised"></span></span>${this.scrollButton("rightarrow")}</div>
          <div class="corner"></div>
        </div>
      </main>
      <div class="status"><span class="s1"></span><span class="s2"></span><span class="s3">7198,341  12425,127 Unknown Units</span></div>
      <footer class="task">
        <button class="start raised">${ico("start")}Пуск</button>
        <div class="quick">${["explorer", "media", "sun", "floppy", "ie", "firefox"].map((n) => html`<button aria-label=${n}>${ico(n)}</button>`)}</div>
        <button class="app active" aria-label="ArcMap">${ico("arcmap")}</button><button class="app raised" aria-label="Presentation">${ico("ppt")}</button>
        <span class="lang">EN</span>
        <div class="tray"><span class="en">En</span>${["kasper", "usb", "net", "flag", "wifi"].map(ico)}<span class="clock">7:08</span>${ico("monitor")}</div>
      </footer>`;
  }
}
